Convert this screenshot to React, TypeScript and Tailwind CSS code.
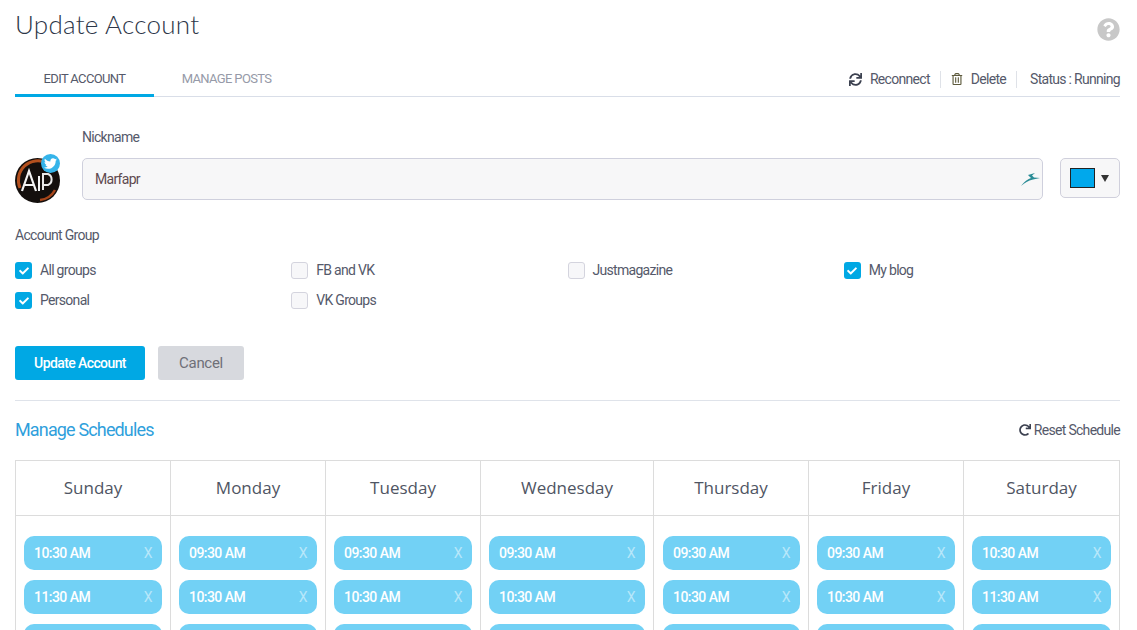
import { FaTwitter, FaQuestionCircle, FaSync, FaRegTrashAlt, FaRedo, FaCheck } from "react-icons/fa";

const groups = [
  { name: "All groups", on: true },
  { name: "FB and VK", on: false },
  { name: "Justmagazine", on: false },
  { name: "My blog", on: true },
  { name: "Personal", on: true },
  { name: "VK Groups", on: false },
];

const days = [
  { day: "Sunday", pad: "pl-[8px] pr-[8px]", times: ["10:30 AM", "11:30 AM"] },
  { day: "Monday", pad: "pl-[8px] pr-[8px]", times: ["09:30 AM", "10:30 AM"] },
  { day: "Tuesday", pad: "pl-[8px] pr-[8px]", times: ["09:30 AM", "10:30 AM"] },
  { day: "Wednesday", pad: "pl-[8px] pr-[8px]", times: ["09:30 AM", "10:30 AM"] },
  { day: "Thursday", pad: "pl-[9px] pr-[8px]", times: ["09:30 AM", "10:30 AM"] },
  { day: "Friday", pad: "pl-[8px] pr-[8px]", times: ["09:30 AM", "10:30 AM"] },
  { day: "Saturday", pad: "pl-[8px] pr-[8px]", times: ["10:30 AM", "11:30 AM"] },
];

const TimePill = ({ time }: { time?: string }) => (
  <div className="flex h-[34px] shrink-0 items-center justify-between rounded-[10px] bg-[#72d1f5] px-[10px] text-[14px] font-medium tracking-[-0.55px] text-white">
    <span>{time}</span>
    {time && <span className="font-normal text-white/50">X</span>}
  </div>
);

const App = () => {
  return (
    <div className="h-[630px] overflow-hidden bg-white pl-[15px] pr-[17px] font-['Roboto',sans-serif] text-[14px] tracking-[-0.7px] text-[#55596a]">
      <div className="flex h-[62px] items-start justify-between">
        <h1 className="pt-[6px] font-['Lato',sans-serif] text-[26px] leading-[36px] font-light tracking-[0.25px] text-[#2c3648]">Update Account</h1>
        <FaQuestionCircle className="mt-[18px] text-[#c8c8c8]" size={23} />
      </div>

      <div className="flex h-[35px] items-start justify-between border-b border-[#d9dee8]">
        <div className="flex text-[13px] tracking-[-0.65px]">
          <div className="flex h-[35px] w-[139px] items-start justify-center border-b-[3px] border-[#00a8e4] pt-[8px] leading-[17px]">EDIT ACCOUNT</div>
          <div className="flex h-[34px] w-[145px] justify-center pt-[8px] leading-[17px] text-[#969aa8]">MANAGE POSTS</div>
        </div>
        <div className="flex items-center pt-[7px] leading-[20px]">
          <FaSync size={13} className="mr-[8px] text-[#3c4150]" />
          <span>Reconnect</span>
          <span className="mx-[10px] h-[17px] w-px bg-[#dfe2e8]" />
          <FaRegTrashAlt size={12} className="mr-[8px] text-[#5d5a3c]" />
          <span>Delete</span>
          <span className="mx-[10px] h-[17px] w-px bg-[#dfe2e8]" />
          <span className="ml-[3px]">Status : Running</span>
        </div>
      </div>

      <div className="mt-[31px] flex items-start">
        <div className="relative mt-[30px] h-[45px] w-[45px] shrink-0">
          <svg viewBox="0 0 45 45" className="h-[45px] w-[45px]">
            <circle cx="22.5" cy="22.5" r="22.5" fill="#140f0d" />
            <path d="M5 30 A19.5 19.5 0 0 1 32 5" fill="none" stroke="#b4501e" strokeWidth="3" />
            <path d="M40 32 A19.5 19.5 0 0 1 25 42" fill="none" stroke="#a8461a" strokeWidth="2.5" />
            <path d="M7 33 L14 13 L21 33 M10 27 H19" fill="none" stroke="#f4f4f4" strokeWidth="2.2" />
            <path d="M24 18 V33" fill="none" stroke="#f4f4f4" strokeWidth="2" />
            <path d="M28 32 V16 H33 A6 6 0 0 1 33 27 H29" fill="none" stroke="#e8e8e8" strokeWidth="2" />
          </svg>
          <div className="absolute right-0 top-[-4px] flex h-[19px] w-[19px] items-center justify-center rounded-full bg-[#35b4ea] text-white">
            <FaTwitter size={13} />
          </div>
        </div>
        <div className="ml-[22px] flex-1">
          <div className="h-[30px] pt-[1px] leading-[17px]">Nickname</div>
          <div className="flex h-[42px] items-center justify-between rounded-[5px] border border-[#cfd0dd] bg-[#f7f7f8] pl-[12px] pr-[2px] text-[#5f4a4f]">
            <span>Marfapr</span>
            <svg viewBox="0 0 20 14" className="h-[14px] w-[20px]">
              <path d="M1 14 C5 9 8 7 11 6 L8 3 L15 1 L12 3.5 L14 5.5 L20 6 L13 7.5 C8 8.5 5 11 1 14 Z" fill="#2a8c96" />
            </svg>
          </div>
        </div>
        <div className="mt-[30px] ml-[17px] flex h-[40px] w-[60px] items-center rounded-[5px] border border-[#d0d0dc] bg-[#f7f7f8] pl-[9px]">
          <div className="h-[20px] w-[25px] border border-[#222] bg-[#00a8ec]" />
          <span className="ml-[6px] h-0 w-0 border-x-[4px] border-t-[7px] border-x-transparent border-t-[#333]" />
        </div>
      </div>

      <div className="mt-[24px] h-[20px] leading-[17px]">Account Group</div>
      <div className="mt-[15px] grid grid-cols-4 gap-y-[13px]">
        {groups.map((g) => (
          <label key={g.name} className="flex h-[17px] items-center leading-[17px]">
            {g.on ? (
              <span className="mr-[8px] flex h-[17px] w-[17px] items-center justify-center rounded-[3px] bg-[#00a8e4] text-white">
                <FaCheck size={10} />
              </span>
            ) : (
              <span className="mr-[8px] h-[17px] w-[17px] rounded-[3px] border border-[#d4d4de] bg-[#f7f7f9]" />
            )}
            {g.name}
          </label>
        ))}
      </div>

      <div className="mt-[37px] flex gap-[13px]">
        <button className="h-[34px] w-[130px] rounded-[3px] bg-[#00a8e4] text-[14px] font-medium tracking-[-0.6px] text-white">Update Account</button>
        <button className="h-[34px] w-[86px] rounded-[3px] bg-[#d7d9de] text-[15px] tracking-[-0.3px] text-[#6f7078]">Cancel</button>
      </div>

      <div className="mt-[20px] border-t border-[#dfe3ea]" />

      <div className="flex h-[59px] items-start justify-between pt-[18px]">
        <h2 className="text-[18px] leading-[22px] tracking-[-0.85px] text-[#2f9fdc]">Manage Schedules</h2>
        <div className="flex items-center leading-[22px]">
          <FaRedo size={12} className="mr-[3px] text-[#3c4150]" />
          Reset Schedule
        </div>
      </div>

      <div className="grid grid-cols-[155px_155px_155px_173px_155px_155px_156px] border-t border-r border-[#dcdcdc]">
        {days.map((d) => (
          <div key={d.day} className="flex h-[200px] flex-col border-l border-[#dcdcdc]">
            <div className="flex h-[55px] shrink-0 items-center justify-center border-b border-[#dcdcdc] font-['Open_Sans',sans-serif] text-[17px] tracking-[0px] text-[#4f5563]">
              {d.day}
            </div>
            <div className={`flex flex-col gap-[10px] pt-[20px] ${d.pad}`}>
              {d.times.map((t) => (
                <TimePill key={t} time={t} />
              ))}
              <TimePill />
            </div>
          </div>
        ))}
      </div>
    </div>
  );
};

export default App;
